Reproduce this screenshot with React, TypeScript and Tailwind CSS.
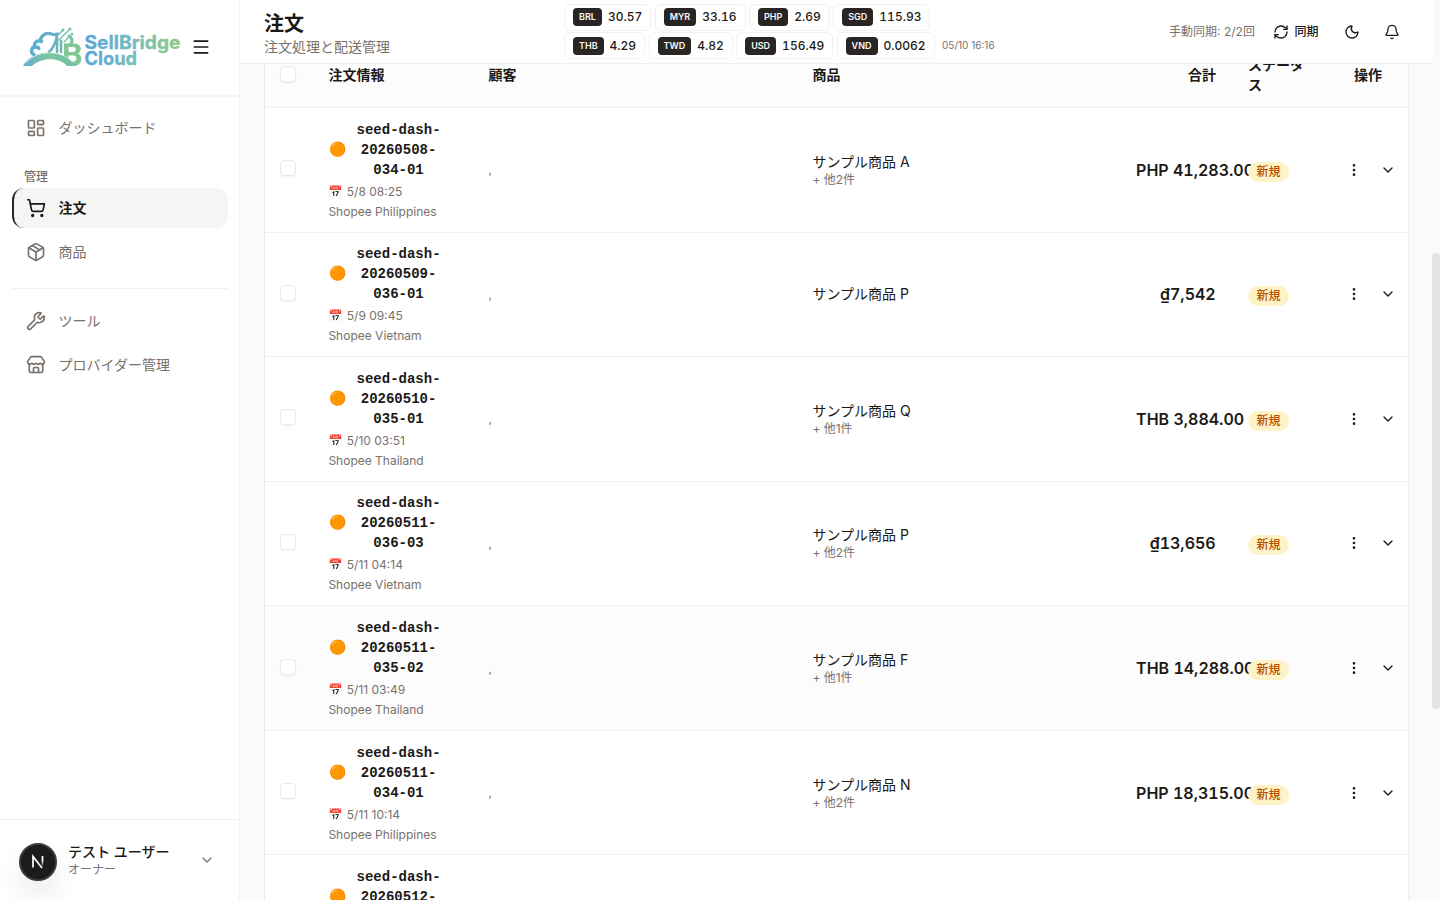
import { ReactNode } from "react";
import {
  Bell,
  ChevronDown,
  EllipsisVertical,
  LayoutDashboard,
  Menu,
  Moon,
  Package,
  RefreshCw,
  ShoppingCart,
  Store,
  Wrench,
} from "lucide-react";

type Order = {
  id: string[];
  date: string;
  shop: string;
  product: string;
  others?: number;
  total: string;
  active?: boolean;
};

const RATES = [
  [
    ["BRL", "30.57"],
    ["MYR", "33.16"],
    ["PHP", "2.69"],
    ["SGD", "115.93"],
  ],
  [
    ["THB", "4.29"],
    ["TWD", "4.82"],
    ["USD", "156.49"],
    ["VND", "0.0062"],
  ],
];

const ORDERS: Order[] = [
  { id: ["seed-dash-", "20260508-", "034-01"], date: "5/8 08:25", shop: "Shopee Philippines", product: "サンプル商品 A", others: 2, total: "PHP 41,283.00" },
  { id: ["seed-dash-", "20260509-", "036-01"], date: "5/9 09:45", shop: "Shopee Vietnam", product: "サンプル商品 P", total: "₫7,542" },
  { id: ["seed-dash-", "20260510-", "035-01"], date: "5/10 03:51", shop: "Shopee Thailand", product: "サンプル商品 Q", others: 1, total: "THB 3,884.00" },
  { id: ["seed-dash-", "20260511-", "036-03"], date: "5/11 04:14", shop: "Shopee Vietnam", product: "サンプル商品 P", others: 2, total: "₫13,656" },
  { id: ["seed-dash-", "20260511-", "035-02"], date: "5/11 03:49", shop: "Shopee Thailand", product: "サンプル商品 F", others: 1, total: "THB 14,288.00", active: true },
  { id: ["seed-dash-", "20260511-", "034-01"], date: "5/11 10:14", shop: "Shopee Philippines", product: "サンプル商品 N", others: 2, total: "PHP 18,315.00" },
  { id: ["seed-dash-", "20260512-"], date: "", shop: "", product: "", total: "" },
];

const COLUMNS = "grid grid-cols-[47.4px_160px_324px_324px_111.6px_88px_88px]";

function Logo() {
  return (
    <svg width="162" height="46" viewBox="0 0 162 46" className="shrink-0">
      <defs>
        <linearGradient id="mark" x1="0" y1="0" x2="60" y2="14" gradientUnits="userSpaceOnUse">
          <stop offset="0" stopColor="#5aa9dc" />
          <stop offset="0.5" stopColor="#62b0cc" />
          <stop offset="1" stopColor="#86ca86" />
        </linearGradient>
        <linearGradient id="deck" x1="0" y1="0" x2="52" y2="0" gradientUnits="userSpaceOnUse">
          <stop offset="0" stopColor="#62aed0" />
          <stop offset="0.5" stopColor="#7cc5a4" />
          <stop offset="1" stopColor="#74c0a8" />
        </linearGradient>
        <linearGradient id="word" x1="62" y1="0" x2="158" y2="0" gradientUnits="userSpaceOnUse">
          <stop offset="0" stopColor="#59a4d8" />
          <stop offset="0.5" stopColor="#76bbbf" />
          <stop offset="1" stopColor="#8dcb7c" />
        </linearGradient>
      </defs>
      <g fill="none" stroke="url(#mark)" strokeLinecap="round" strokeLinejoin="round">
        <path
          d="M12 29.500c-4-2-3-7.500 1.500-7.500 1.500 0 3 .5 3.500 1.500M12.500 22c-1-5 4-7.500 7-5.500M18.500 15.500c0-5 6-8.500 11-6.500 3 1 4 1 6 0"
          strokeWidth="3.400"
        />
        <path d="M27 27c5-4 6-9 8-15v15M39 27V16" strokeWidth="2.600" />
        <path d="M34 12l6-6M37 15l10-10M42 17l7-7" strokeWidth="1.300" />
        <path d="M47 11c3.500 2 3.500 5 2 8" strokeWidth="3" />
      </g>
      <path
        d="M42 18.500h10c8 0 8.500 8 4 10 5.500 2.500 4 12.500-4 12.500h-6L42 33zM46.500 22v5h5c3 0 3-5 0-5zM46.500 30.500v6h5c4 0 4-6 0-6z"
        fill="#80c795"
        fillRule="evenodd"
      />
      <path d="M1 41C6 32 16 27.500 27 27.500c11 0 21 5 27 13.500h-9C38 32 19 32 10 41z" fill="url(#deck)" />
      <path d="M4 38C15 24.500 40 24.500 51 37.500" fill="none" stroke="#fff" strokeWidth="0.600" />
      <g fill="#75bda5">
        <circle cx="41" cy="5" r="1.500" />
        <circle cx="48" cy="4" r="1.500" />
        <circle cx="50" cy="9" r="1.300" />
      </g>
      <g
        fill="url(#word)"
        stroke="url(#word)"
        strokeWidth="0.300"
        strokeLinejoin="round"
        fontFamily="Inter, sans-serif"
        fontSize="18.500"
        fontWeight="700"
      >
        <text x="62.500" y="24" textLength="96" lengthAdjust="spacingAndGlyphs">SellBridge</text>
        <text x="62.500" y="40" textLength="52.500" lengthAdjust="spacingAndGlyphs">Cloud</text>
      </g>
    </svg>
  );
}

function NavItem({ icon, label, active }: { icon: ReactNode; label: string; active?: boolean }) {
  if (active) {
    return (
      <div className="flex h-10 items-center gap-[12.6px] rounded-xl border-l-2 border-[#292524] bg-[#f5f5f4] pl-3 text-sm font-semibold text-[#1c1917]">
        {icon}
        <span>{label}</span>
      </div>
    );
  }

  return (
    <div className="flex h-10 items-center gap-[12.6px] pl-3.5 text-sm text-[#78716c]">
      {icon}
      <span>{label}</span>
    </div>
  );
}

function Sidebar() {
  return (
    <aside className="flex h-full w-60 shrink-0 flex-col border-r border-[#f1f1f0] bg-white">
      <div className="flex h-[97px] shrink-0 items-center border-b-2 border-[#f5f5f4] pl-[22px]">
        <Logo />
        <Menu className="mb-px ml-[7px] size-5 text-[#1c1917]" />
      </div>
      <nav className="flex-1 pt-[11px] pr-[11.5px] pl-3">
        <NavItem icon={<LayoutDashboard className="size-5" />} label="ダッシュボード" />
        <p className="mt-[19px] mb-px pl-3 text-xs leading-5 font-medium text-[#78716c]">管理</p>
        <NavItem icon={<ShoppingCart className="size-5" />} label="注文" active />
        <div className="mt-1">
          <NavItem icon={<Package className="size-5" />} label="商品" />
        </div>
        <div className="my-3 mt-4 border-t border-[#f1f1f0]" />
        <NavItem icon={<Wrench className="size-5" />} label="ツール" />
        <div className="mt-1">
          <NavItem icon={<Store className="size-5" />} label="プロバイダー管理" />
        </div>
      </nav>
      <div className="flex h-[81px] shrink-0 items-center border-t border-[#f1f1f0] pl-[19px]">
        <div className="mt-[3px] flex size-[38px] shrink-0 items-center justify-center rounded-full border-2 border-[#3a3a3a] bg-[#1b1b1b] shadow-[0_16px_32px_-8px_rgba(0,0,0,0.24)]">
          <svg width="14" height="16" viewBox="0 0 14 16" fill="none">
            <defs>
              <linearGradient id="stem" x1="0" y1="2" x2="0" y2="13" gradientUnits="userSpaceOnUse">
                <stop offset="0.4" stopColor="#fff" />
                <stop offset="1" stopColor="#fff" stopOpacity="0" />
              </linearGradient>
            </defs>
            <path d="M2 13.500v-11l9 11.500" stroke="#fff" strokeWidth="1.700" />
            <path d="M11.500 2v10.500" stroke="url(#stem)" strokeWidth="1.700" />
          </svg>
        </div>
        <div className="ml-[11px] w-[131px]">
          <p className="text-sm leading-5 font-medium text-[#1c1917]">テスト ユーザー</p>
          <p className="text-xs leading-4 text-[#78716c]">オーナー</p>
        </div>
        <ChevronDown className="size-4 text-[#78716c]" />
      </div>
    </aside>
  );
}

function Header() {
  return (
    <header className="relative z-10 flex h-16 w-[1193px] shrink-0 border-b border-[#eeeeed] bg-white pl-6">
      <div className="w-[300px] shrink-0 pt-[10px]">
        <h1 className="text-xl leading-7 font-semibold text-[#1c1917]">注文</h1>
        <p className="-mt-px text-sm leading-5 text-[#78716c]">注文処理と配送管理</p>
      </div>
      <div className="flex flex-1 flex-col gap-[1.5px] pt-[3.5px]">
        {RATES.map((row, i) => (
          <div key={i} className="flex items-center gap-[3.4px]">
            {row.map(([code, rate]) => (
              <div
                key={code}
                className="flex h-[27px] items-center gap-1.5 rounded-md border border-[#f1f1f0] px-2"
              >
                <span className="flex h-[18px] items-center rounded bg-[#292524] px-1.5 text-[9px] font-semibold text-[#fafaf9]">
                  {code}
                </span>
                <span className="text-xs font-medium text-[#1c1917] tabular-nums">{rate}</span>
              </div>
            ))}
            {i === 1 && <span className="ml-1 text-[10px] text-[#78716c]">05/10 16:16</span>}
          </div>
        ))}
      </div>
      <div className="flex h-16 items-center pr-[32.6px] text-xs text-[#1c1917]">
        <span className="text-[#78716c]">手動同期: 2/2回</span>
        <RefreshCw className="ml-[18.5px] size-4" />
        <span className="ml-[5px] font-medium">同期</span>
        <Moon className="ml-[26px] size-4" />
        <Bell className="ml-6 size-4" />
      </div>
    </header>
  );
}

function Checkbox() {
  return <div className="size-4 rounded border border-[#e9e9ec] bg-white shadow-xs" />;
}

function OrderRow({ order }: { order: Order }) {
  return (
    <div
      className={
        order.active
          ? `${COLUMNS} h-[124.57px] shrink-0 items-center border-b border-[#f1f1f3] bg-[#fcfcfc]`
          : `${COLUMNS} h-[124.57px] shrink-0 items-center border-b border-[#f1f1f3] bg-white`
      }
    >
      <div className="pb-[3px] pl-[15.4px]">
        <Checkbox />
      </div>
      <div className="self-start px-4 pt-[11.7px]">
        <div className="flex items-center gap-2 pl-[0.2px]">
          <span className="mb-0.5 w-[18px] shrink-0 text-sm leading-5">🟠</span>
          <div className="w-[88px] text-center font-['Liberation_Mono',monospace] text-sm leading-5 font-bold text-[#1c1917]">
            {order.id.map((part) => (
              <p key={part}>{part}</p>
            ))}
            {order.id.length < 3 && <div className="h-5" />}
          </div>
        </div>
        {order.date && <p className="mt-1 text-xs leading-4 text-[#78716c]">📅 {order.date}</p>}
        <p className="mt-1 text-xs leading-4 whitespace-nowrap text-[#78716c]">{order.shop}</p>
      </div>
      {order.total && (
        <>
          <div className="px-4 pt-px text-xs text-[#78716c]">,</div>
          <div className="px-4">
            <p className="text-sm leading-5 text-[#1c1917]">{order.product}</p>
            {order.others && (
              <p className="text-xs leading-4 text-[#78716c]">+ 他{order.others}件</p>
            )}
          </div>
          <div className="flex justify-end pr-[16.3px] pl-[15.7px] text-base font-semibold whitespace-nowrap text-[#1c1917] tabular-nums">
            <span className="w-full min-w-0 text-right">{order.total}</span>
          </div>
          <div className="relative pl-4">
            <span className="inline-flex h-5 items-center rounded-full bg-[#fef3c6] px-[8.5px] text-xs font-medium text-[#bb4d00]">
              新規
            </span>
          </div>
          <div className="flex items-center gap-[18px] pl-[26px] text-[#1c1917]">
            <EllipsisVertical className="size-4" />
            <ChevronDown className="size-4" />
          </div>
        </>
      )}
    </div>
  );
}

export default function App() {
  return (
    <div className="flex h-[900px] w-[1440px] overflow-hidden bg-[#fafafa] font-[Inter,'Noto_Sans_CJK_JP',sans-serif]">
      <Sidebar />
      <div className="flex min-w-0 flex-1 flex-col">
        <Header />
        <div className="flex min-h-0 flex-1 justify-between">
          <main className="ml-6 flex w-[1145px] flex-col overflow-hidden border-x border-[#ececef] bg-white">
            <div
              className={`${COLUMNS} h-[44px] shrink-0 border-b border-[#f1f1f3] bg-[#fcfcfc] text-sm leading-5 font-semibold text-[#1c1917]`}
            >
              <div className="pt-0.5 pl-[15.4px]">
                <Checkbox />
              </div>
              <div className="px-4 pt-px">注文情報</div>
              <div className="px-4 pt-px">顧客</div>
              <div className="px-4 pt-px">商品</div>
              <div className="px-4 pt-px text-right">合計</div>
              <div className="-mt-[9px] pl-4">
                ステータ
                <br />ス
              </div>
              <div className="pt-px pl-[34px]">操作</div>
            </div>
            {ORDERS.map((order) => (
              <OrderRow key={order.id.join("")} order={order} />
            ))}
          </main>
          <div className="w-2 pt-[189px]">
            <div className="h-[456px] rounded-full bg-[#e4e4e7]" />
          </div>
        </div>
      </div>
    </div>
  );
}
